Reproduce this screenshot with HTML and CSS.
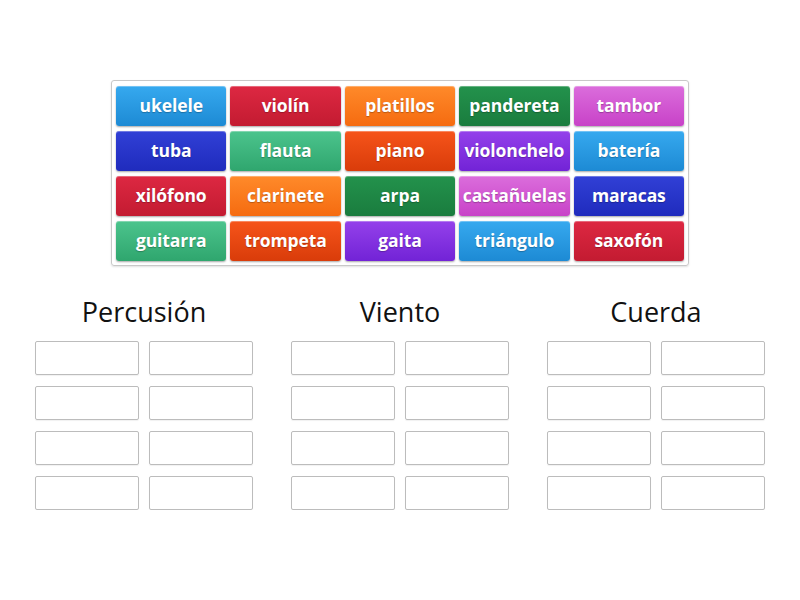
FILE: index.html
```html
<!DOCTYPE html>
<html lang="es">
<head>
  <meta charset="UTF-8">
  <meta name="viewport" content="width=device-width, initial-scale=1.0">
  <title>Instrumentos</title>
  <link rel="stylesheet" href="styles.css">
</head>
<body>
  <div class="page">
    <div class="bank">
      <div class="tile sky">ukelele</div>
      <div class="tile red">violín</div>
      <div class="tile orange">platillos</div>
      <div class="tile green">pandereta</div>
      <div class="tile pink">tambor</div>

      <div class="tile navy">tuba</div>
      <div class="tile mint">flauta</div>
      <div class="tile fire">piano</div>
      <div class="tile violet">violonchelo</div>
      <div class="tile sky">batería</div>

      <div class="tile red">xilófono</div>
      <div class="tile orange">clarinete</div>
      <div class="tile green">arpa</div>
      <div class="tile pink">castañuelas</div>
      <div class="tile navy">maracas</div>

      <div class="tile mint">guitarra</div>
      <div class="tile fire">trompeta</div>
      <div class="tile violet">gaita</div>
      <div class="tile sky">triángulo</div>
      <div class="tile red">saxofón</div>
    </div>

    <div class="groups">
      <div class="group">
        <h2>Percusión</h2>
        <div class="slots">
          <div class="slot"></div><div class="slot"></div>
          <div class="slot"></div><div class="slot"></div>
          <div class="slot"></div><div class="slot"></div>
          <div class="slot"></div><div class="slot"></div>
        </div>
      </div>
      <div class="group">
        <h2>Viento</h2>
        <div class="slots">
          <div class="slot"></div><div class="slot"></div>
          <div class="slot"></div><div class="slot"></div>
          <div class="slot"></div><div class="slot"></div>
          <div class="slot"></div><div class="slot"></div>
        </div>
      </div>
      <div class="group">
        <h2>Cuerda</h2>
        <div class="slots">
          <div class="slot"></div><div class="slot"></div>
          <div class="slot"></div><div class="slot"></div>
          <div class="slot"></div><div class="slot"></div>
          <div class="slot"></div><div class="slot"></div>
        </div>
      </div>
    </div>
  </div>
</body>
</html>
```

FILE: styles.css
```css
body {
  margin: 0;
  background: #fff;
  font-family: "Open Sans", "Noto Sans", sans-serif;
  color: #111;
}

.page {
  padding-top: 80px;
}

.bank {
  box-sizing: border-box;
  width: 578px;
  margin: 0 auto;
  padding: 5px 4px 4px 4px;
  border: 1px solid #c8c8c8;
  border-radius: 3px;
  box-shadow: 0 1px 2px rgba(0, 0, 0, 0.12);
  display: grid;
  grid-template-columns: repeat(5, 1fr);
  grid-auto-rows: 40px;
  column-gap: 4px;
  row-gap: 5px;
}

.tile {
  display: flex;
  align-items: center;
  justify-content: center;
  border-radius: 3px;
  color: #fff;
  font-size: 17.5px;
  font-weight: bold;
  white-space: nowrap;
  letter-spacing: -0.1px;
  text-shadow: 0 1px 1px rgba(0, 0, 0, 0.25);
  box-shadow: 0 1px 2px rgba(0, 0, 0, 0.35), inset 0 1px 0 rgba(255, 255, 255, 0.3);
  padding-bottom: 2px;
  box-sizing: border-box;
}

.sky    { background: linear-gradient(#36a9ef, #1d8ad4); }
.red    { background: linear-gradient(#dd2842, #c31b31); }
.orange { background: linear-gradient(#ff8a2a, #f56b10); }
.green  { background: linear-gradient(#23924c, #1a7c3e); }
.pink   { background: linear-gradient(#db6ddc, #c842c8); }
.navy   { background: linear-gradient(#3140d6, #1f2bbd); }
.mint   { background: linear-gradient(#4cc48d, #2fa66e); }
.fire   { background: linear-gradient(#f6541a, #d93c0a); }
.violet { background: linear-gradient(#9441ea, #7223d6); }

.groups {
  display: flex;
  justify-content: center;
  gap: 38px;
  margin-top: 28px;
}

.group {
  width: 218px;
}

.group h2 {
  margin: 0 0 11px 0;
  font-size: 27px;
  font-weight: normal;
  line-height: 36px;
  text-align: center;
  color: #111;
}

.slots {
  display: grid;
  grid-template-columns: 104px 104px;
  grid-auto-rows: 34px;
  column-gap: 10px;
  row-gap: 11px;
}

.slot {
  border: 1px solid #bcbcbc;
  border-radius: 2px;
  box-shadow: 0 1px 1px rgba(0, 0, 0, 0.06);
}
```
